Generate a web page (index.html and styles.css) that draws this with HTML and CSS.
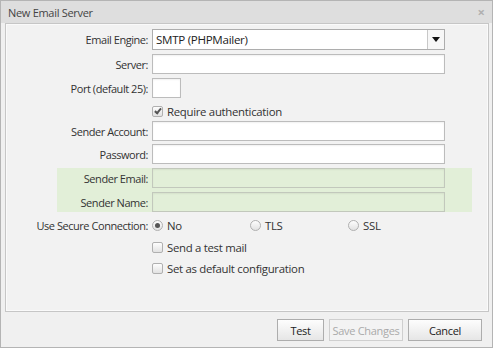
FILE: index.html
```html
<!DOCTYPE html>
<html lang="en">
<head>
    <meta charset="UTF-8">
    <title>New Email Server</title>
    <link rel="stylesheet" href="styles.css">
</head>
<body>
    <div class="dialog">
        <div class="titlebar">
            <span class="title">New Email Server</span>
            <span class="close">&times;</span>
        </div>
        <div class="dialog-body">
            <div class="panel">
                <div class="row row-engine">
                    <label class="lbl">Email Engine:</label>
                    <div class="select">
                        <span class="select-text">SMTP (PHPMailer)</span>
                        <span class="select-arrow"></span>
                    </div>
                </div>
                <div class="row">
                    <label class="lbl">Server:</label>
                    <div class="input"></div>
                </div>
                <div class="row">
                    <label class="lbl">Port (default 25):</label>
                    <div class="input input-port"></div>
                </div>
                <div class="row row-check row-auth">
                    <span class="lbl"></span>
                    <span class="check checked"></span>
                    <span class="check-text">Require authentication</span>
                </div>
                <div class="row row-account">
                    <label class="lbl">Sender Account:</label>
                    <div class="input"></div>
                </div>
                <div class="row">
                    <label class="lbl">Password:</label>
                    <div class="input"></div>
                </div>
                <div class="highlight">
                    <div class="row">
                        <label class="lbl">Sender Email:</label>
                        <div class="input input-green"></div>
                    </div>
                    <div class="row">
                        <label class="lbl">Sender Name:</label>
                        <div class="input input-green"></div>
                    </div>
                </div>
                <div class="row row-check row-secure">
                    <label class="lbl">Use Secure Connection:</label>
                    <span class="option"><span class="radio selected"></span>No</span>
                    <span class="option"><span class="radio"></span>TLS</span>
                    <span class="option"><span class="radio"></span>SSL</span>
                </div>
                <div class="row row-check row-test">
                    <span class="lbl"></span>
                    <span class="check"></span>
                    <span class="check-text">Send a test mail</span>
                </div>
                <div class="row row-check row-default">
                    <span class="lbl"></span>
                    <span class="check"></span>
                    <span class="check-text">Set as default configuration</span>
                </div>
            </div>
            <div class="buttons">
                <button class="btn btn-test">Test</button>
                <button class="btn btn-save" disabled>Save Changes</button>
                <button class="btn btn-cancel">Cancel</button>
            </div>
        </div>
    </div>
</body>
</html>
```

FILE: styles.css
```css
body {
    margin: 0;
    padding: 0;
    font-family: "Open Sans", "Liberation Sans", sans-serif;
    font-size: 11px;
    color: #333;
    background-color: #fff;
}
.dialog {
    width: 493px;
    height: 348px;
    box-sizing: border-box;
    border: 1px solid #b4b4b4;
    background-color: #f0f0f0;
    display: flex;
    flex-direction: column;
}
.titlebar {
    height: 22px;
    background-color: #dedede;
    display: flex;
    align-items: center;
    justify-content: space-between;
    padding: 0 7px 0 7px;
    flex-shrink: 0;
}
.title {
    font-size: 11px;
    color: #444;
    letter-spacing: -0.3px;
}
.close {
    font-size: 13px;
    font-weight: bold;
    color: #b0b0b0;
    line-height: 1;
}
.dialog-body {
    flex: 1;
    display: flex;
    flex-direction: column;
}
.panel {
    height: 289px;
    box-sizing: border-box;
    margin: 0 3px 0 4px;
    border: 1px solid #c6c6c6;
    box-shadow: inset 0 0 0 1px #fafafa;
    background-color: #f2f2f2;
    padding-top: 5px;
}
.row {
    display: flex;
    align-items: center;
    margin-bottom: 4px;
}
.lbl {
    width: 142px;
    flex-shrink: 0;
    text-align: right;
    padding-right: 4px;
    letter-spacing: -0.45px;
    white-space: nowrap;
}
.input {
    width: 293px;
    height: 20px;
    box-sizing: border-box;
    border: 1px solid #bcbcbc;
    background-color: #fff;
    box-shadow: inset 0 1px 2px rgba(0,0,0,0.06);
}
.input-port {
    width: 29px;
}
.input-green {
    background-color: #e2efd8;
    border-color: #c2c8bc;
}
.select {
    width: 293px;
    height: 21px;
    box-sizing: border-box;
    border: 1px solid #adadad;
    background-color: #fff;
    display: flex;
    align-items: center;
    justify-content: space-between;
}
.select-text {
    font-size: 11.6px;
    color: #222;
    padding-left: 3px;
    letter-spacing: -0.3px;
}
.select-arrow {
    width: 16px;
    height: 19px;
    border-left: 1px solid #c8c8c8;
    background-color: #f7f7f7;
    position: relative;
}
.select-arrow::after {
    content: "";
    position: absolute;
    left: 4px;
    top: 7px;
    border-left: 4px solid transparent;
    border-right: 4px solid transparent;
    border-top: 5px solid #111;
}
.row-check {
    height: 18px;
}
.row-auth {
    margin-bottom: 1px;
}
.row-account {
    margin-bottom: 3px;
}
.highlight {
    margin-left: 51px;
    width: 415px;
    background-color: #e2efd8;
}
.highlight .lbl {
    width: 91px;
}
.highlight .row:last-child {
    margin-bottom: 0;
}
.row-secure {
    margin-top: 4px;
    margin-bottom: 4px;
}
.row-test {
    margin-bottom: 3px;
}
.check {
    width: 9px;
    height: 9px;
    border: 1px solid #b0b0b0;
    border-radius: 2px;
    background: linear-gradient(#fdfdfd, #e2e2e2);
    margin-right: 4px;
    position: relative;
    flex-shrink: 0;
}
.check.checked::after {
    content: "";
    position: absolute;
    left: 3px;
    top: 0px;
    width: 2px;
    height: 5px;
    border-right: 2px solid #555;
    border-bottom: 2px solid #555;
    transform: rotate(40deg);
}
.check-text {
    font-size: 11.4px;
    letter-spacing: -0.3px;
}
.option {
    width: 98px;
    display: flex;
    align-items: center;
    font-size: 11.4px;
    letter-spacing: -0.3px;
}
.radio {
    width: 9px;
    height: 9px;
    border: 1px solid #b0b0b0;
    border-radius: 50%;
    background: linear-gradient(#fdfdfd, #e2e2e2);
    margin-right: 4px;
    position: relative;
}
.radio.selected::after {
    content: "";
    position: absolute;
    left: 2px;
    top: 2px;
    width: 5px;
    height: 5px;
    border-radius: 50%;
    background-color: #555;
}
.buttons {
    display: flex;
    justify-content: flex-end;
    gap: 5px;
    padding: 7px 10px 0 0;
}
.btn {
    height: 22px;
    box-sizing: border-box;
    border: 1px solid #adadad;
    background: linear-gradient(#fdfdfd, #e6e6e6);
    font-family: "Open Sans", "Liberation Sans", sans-serif;
    font-size: 11px;
    letter-spacing: -0.3px;
    color: #222;
    padding: 0;
}
.btn-test {
    width: 47px;
}
.btn-save {
    width: 74px;
    color: #aaa;
    border-color: #cfcfcf;
    background: #f3f3f3;
}
.btn-cancel {
    width: 74px;
}
```
